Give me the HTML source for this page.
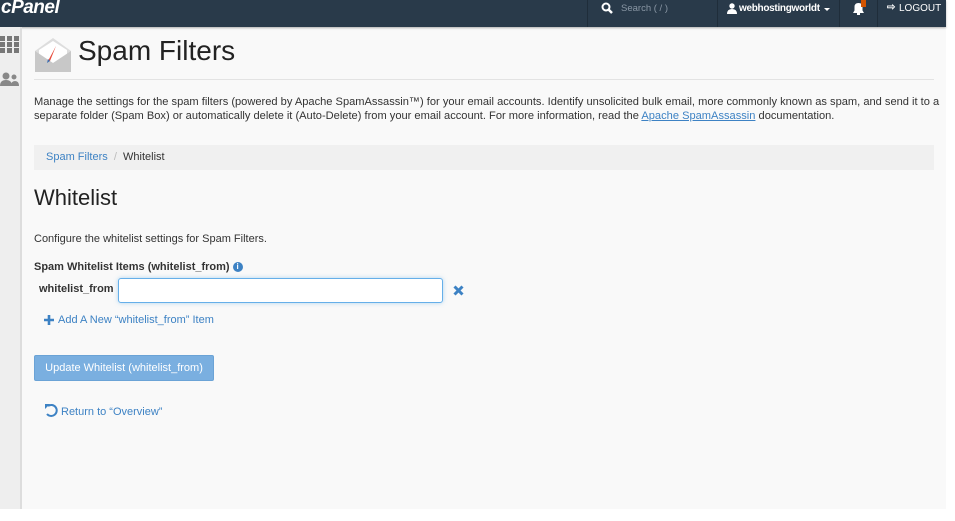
<!DOCTYPE html>
<html><head><style>
*{margin:0;padding:0;box-sizing:border-box}
body{width:955px;height:521px;background:#fff;font-family:"Liberation Sans",sans-serif;position:relative;overflow:hidden;font-size:11px;color:#333}
#page{position:absolute;left:0;top:0;width:946px;height:509px;background:#f9f9f9}
#top{position:absolute;left:0;top:0;width:946px;height:27px;background:#293a4a;box-shadow:0 1px 2px rgba(0,0,0,.3)}
.logo{position:absolute;left:1px;top:-3px;color:#fff;font-weight:bold;font-style:italic;font-size:19px;letter-spacing:-.5px}
.sep{position:absolute;top:0;width:1px;height:27px;background:#1f2d3a}
.tx{position:absolute;color:#fff;font-size:10px;top:3px}
#side{position:absolute;left:0;top:27px;width:22px;height:482px;background:#eee;border-right:2px solid #ddd}
.main{position:absolute;left:34px}
a{color:#3d82c4}
</style></head><body>
<div id="page">
<div id="top">
<div class="logo">cPanel</div>
<div class="sep" style="left:587px"></div>
<svg style="position:absolute;left:601px;top:2px" width="12" height="12" viewBox="0 0 12 12"><circle cx="5" cy="5" r="3.5" stroke="#fff" stroke-width="2" fill="none"/><path d="M7.5 7.5L11 11" stroke="#fff" stroke-width="2.5"/></svg>
<div class="tx" style="left:621px;color:#8a97a5;font-size:9.5px">Search ( / )</div>
<div class="sep" style="left:717px"></div>
<svg style="position:absolute;left:727px;top:3px" width="10" height="11" viewBox="0 0 10 11"><circle cx="5" cy="3" r="2.7" fill="#fff"/><path d="M0 11Q0 6 5 6Q10 6 10 11Z" fill="#fff"/></svg>
<div class="tx" style="left:739px;font-weight:bold;font-size:10px;letter-spacing:-.3px">webhostingworldt</div>
<div style="position:absolute;left:824px;top:8px;border:3px solid transparent;border-top:3px solid #fff"></div>
<div class="sep" style="left:839px"></div>
<svg style="position:absolute;left:852px;top:0px" width="16" height="16" viewBox="0 0 16 16"><path d="M1 13L2.5 10.5V7Q2.5 3 6.5 3Q10.5 3 10.5 7V10.5L12 13Z" fill="#fff"/><rect x="5" y="13" width="3" height="2" fill="#fff"/><rect x="9" y="0" width="5" height="7" fill="#d35400"/></svg>
<div class="sep" style="left:877px"></div>
<div class="tx" style="left:887px;font-size:10px;top:2px;font-weight:bold">&#x21E8;</div>
<div class="tx" style="left:899px;font-size:10px">LOGOUT</div>
</div>
<div id="side">
<svg style="position:absolute;left:0;top:9px" width="19" height="18"><g fill="#777"><rect x="0" y="0" width="5" height="5"/><rect x="7" y="0" width="5" height="5"/><rect x="14" y="0" width="5" height="5"/><rect x="0" y="6" width="5" height="5"/><rect x="7" y="6" width="5" height="5"/><rect x="14" y="6" width="5" height="5"/><rect x="0" y="12" width="5" height="5"/><rect x="7" y="12" width="5" height="5"/><rect x="14" y="12" width="5" height="5"/></g></svg>
<svg style="position:absolute;left:0;top:45px" width="20" height="15"><g fill="#888"><circle cx="6" cy="4" r="3.5"/><path d="M0 14Q0 8 6 8Q12 8 12 14Z"/><circle cx="14" cy="5" r="2.5"/><path d="M11 14Q11 9 15 9Q19 9 19 14Z"/></g></svg>
</div>
<svg style="position:absolute;left:34px;top:37px" width="38" height="36" viewBox="0 0 38 36"><path d="M1 14L19 1L37 14V35H1Z" fill="#ddd"/><path d="M5 13L19 4L33 13V26H5Z" fill="#fff"/><path d="M1 14L19 26L37 14V35H1Z" fill="#c8c8c8"/><path d="M22 9L14 24L16 24Z" fill="#e74c3c"/><path d="M14 22L13 26L16 24Z" fill="#3d6fb0"/></svg>
<div class="main" style="top:35px;left:78px;font-size:28px;color:#222">Spam Filters</div>
<div style="position:absolute;left:34px;top:79px;width:900px;height:1px;background:#e3e3e3"></div>
<div class="main" style="top:95px;width:912px;line-height:14px;font-size:11.1px">Manage the settings for the spam filters (powered by Apache SpamAssassin™) for your email accounts. Identify unsolicited bulk email, more commonly known as spam, and send it to a separate folder (Spam Box) or automatically delete it (Auto-Delete) from your email account. For more information, read the <a href="#x">Apache SpamAssassin</a> documentation.</div>
<div style="position:absolute;left:34px;top:145px;width:900px;height:25px;background:#f0f0f0"></div>
<div class="main" style="top:151px;left:46px;font-size:11px"><span style="color:#3d82c4">Spam Filters</span> <span style="color:#bbb">&nbsp;/&nbsp;</span> Whitelist</div>
<div class="main" style="top:185px;font-size:22px;color:#222">Whitelist</div>
<div class="main" style="top:233px;font-size:11px">Configure the whitelist settings for Spam Filters.</div>
<div class="main" style="top:261px;font-size:11px;font-weight:bold">Spam Whitelist Items (whitelist_from) <span style="display:inline-block;width:10px;height:10px;border-radius:50%;background:#3d82c4;color:#fff;font-size:8px;text-align:center;line-height:10px;vertical-align:1px">i</span></div>
<div class="main" style="top:283px;left:39px;font-size:11px;font-weight:bold">whitelist_from</div>
<div style="position:absolute;left:118px;top:278px;width:325px;height:25px;background:#fff;border:1px solid #66afe9;border-radius:3px;box-shadow:0 0 4px rgba(102,175,233,.5)"></div>
<svg style="position:absolute;left:453px;top:285px" width="11" height="11"><path d="M1.5 1.5L9.5 9.5M9.5 1.5L1.5 9.5" stroke="#3d82c4" stroke-width="3"/></svg>
<svg style="position:absolute;left:44px;top:315px" width="10" height="10"><path d="M5 0V10M0 5H10" stroke="#3d82c4" stroke-width="2.6"/></svg>
<div class="main" style="top:314px;left:58px;font-size:11px;color:#3d82c4">Add A New “whitelist_from” Item</div>
<div style="position:absolute;left:34px;top:355px;width:180px;height:26px;background:#7aafe0;border:1px solid #6ba3d6;border-radius:2px;color:#fff;font-size:11px;line-height:24px;text-align:center">Update Whitelist (whitelist_from)</div>
<svg style="position:absolute;left:44px;top:403px" width="15" height="15" viewBox="0 0 15 15"><path d="M4 3A5.5 5.5 0 1 1 3 11" stroke="#3d82c4" stroke-width="2" fill="none"/><path d="M1 1L6 1L1 6Z" fill="#3d82c4"/></svg>
<div class="main" style="top:406px;left:61px;font-size:11px;color:#3d82c4">Return to “Overview”</div>
</div>
</body></html>
